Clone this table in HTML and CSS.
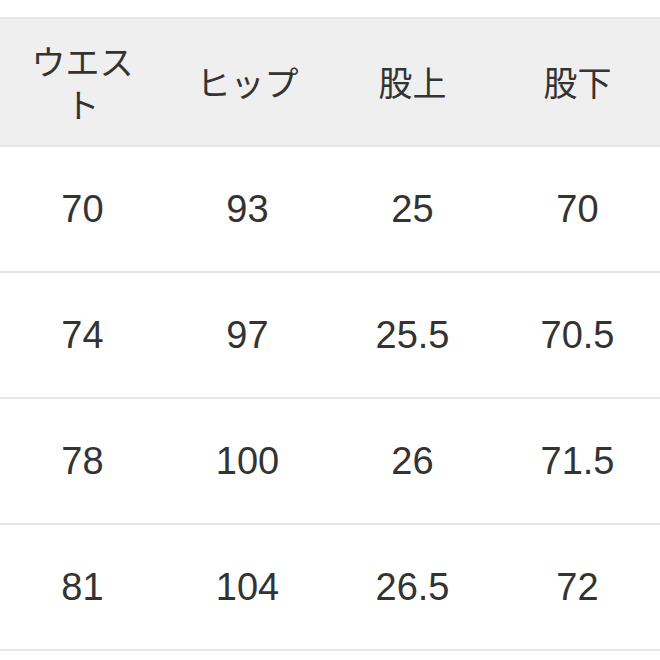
FILE: index.html
```html
<!DOCTYPE html>
<html lang="ja">
<head>
<meta charset="utf-8">
<link rel="stylesheet" href="styles.css">
</head>
<body>
<table class="size-table">
  <thead>
    <tr>
      <th>ウエスト</th>
      <th>ヒップ</th>
      <th>股上</th>
      <th>股下</th>
    </tr>
  </thead>
  <tbody>
    <tr><td>70</td><td>93</td><td>25</td><td>70</td></tr>
    <tr><td>74</td><td>97</td><td>25.5</td><td>70.5</td></tr>
    <tr><td>78</td><td>100</td><td>26</td><td>71.5</td></tr>
    <tr><td>81</td><td>104</td><td>26.5</td><td>72</td></tr>
  </tbody>
</table>
</body>
</html>
```
FILE: styles.css
```css
html, body {
  margin: 0;
  padding: 0;
  background: #ffffff;
}
.size-table {
  width: 660px;
  margin-top: 17px;
  border-collapse: collapse;
  table-layout: fixed;
  font-family: "Liberation Sans", "Noto Sans CJK JP", sans-serif;
  color: #333333;
}
.size-table th,
.size-table td {
  width: 165px;
  padding: 0 20px;
  box-sizing: border-box;
  text-align: center;
  vertical-align: middle;
  border-bottom: 2px solid #e6e6e6;
}
.size-table td {
  height: 126px;
  font-size: 38px;
  line-height: 44px;
}
.size-table th {
  height: 127.5px;
  background: #efefef;
  font-weight: normal;
  font-size: 34px;
  line-height: 43px;
  font-family: "Noto Sans CJK JP", sans-serif;
  border-top: 2px solid #e6e6e6;
}
```
